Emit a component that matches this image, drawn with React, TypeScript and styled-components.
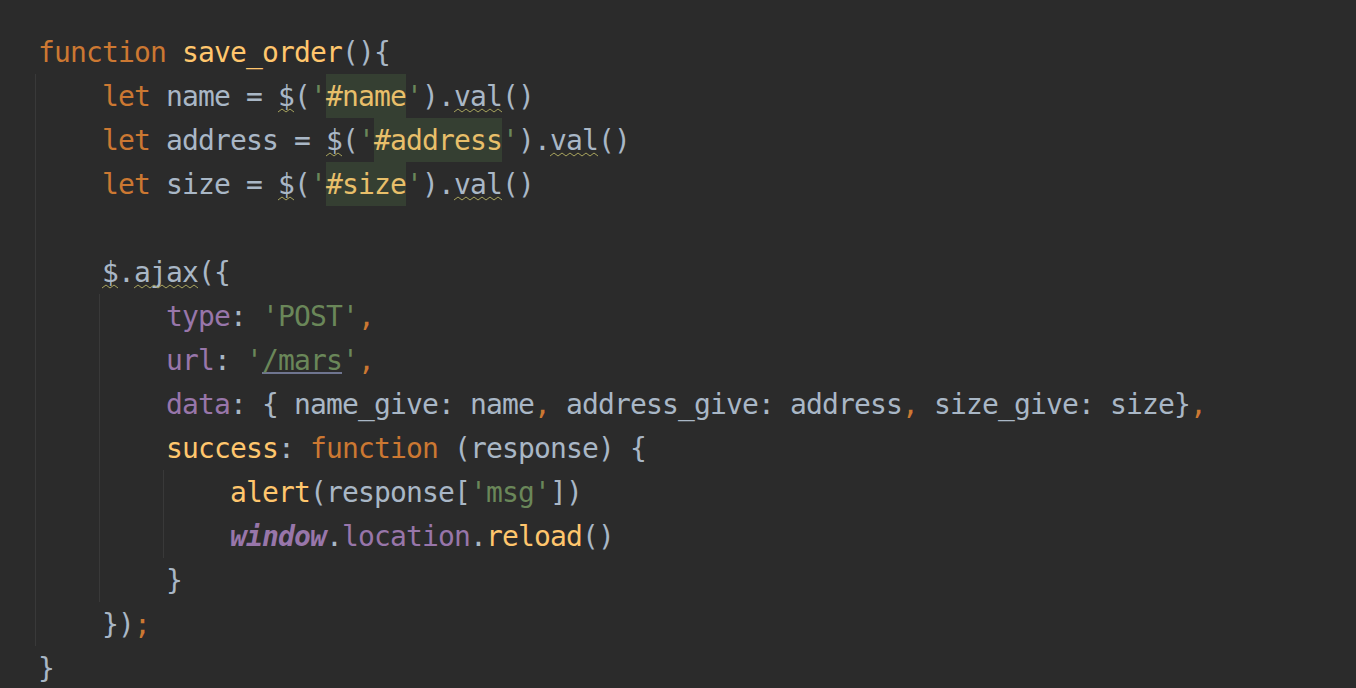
import React from "react";
import styled, { createGlobalStyle, css } from "styled-components";

const Global = createGlobalStyle`
  html, body {
    margin: 0;
    padding: 0;
    background: #2b2b2b;
    width: 1356px;
    height: 688px;
    overflow: hidden;
  }
`;

type Kind = "plain" | "kw" | "fn" | "str" | "prop" | "inj" | "glob";

const colors: Record<Kind, string> = {
  plain: "#a9b7c6",
  kw: "#cc7832",
  fn: "#ffc66d",
  str: "#6a8759",
  prop: "#9876aa",
  inj: "#e8bf6a",
  glob: "#9876aa",
};

const CHAR = 16;

const Editor = styled.div`
  width: 1356px;
  height: 688px;
  background: #2b2b2b;
  box-sizing: border-box;
  padding: 30px 0 0 38px;
  font-family: "DejaVu Sans Mono", "Liberation Mono", monospace;
  font-size: 28px;
  letter-spacing: -0.86px;
  color: #a9b7c6;
  overflow: hidden;
`;

const Line = styled.div`
  height: 44px;
  line-height: 44px;
  white-space: pre;
  padding-top: 1px;
  box-sizing: border-box;
`;

const Block = styled.div`
  margin-left: -3px;
  padding-left: 66px;
  border-left: 1px solid #393939;
`;

const Tok = styled.span<{ $k?: Kind; $link?: boolean }>`
  color: ${(p) => colors[p.$k ?? "plain"]};
  ${(p) =>
    p.$k === "glob" &&
    css`
      font-style: italic;
      font-weight: bold;
    `}
  ${(p) =>
    p.$link &&
    css`
      text-decoration-line: underline;
      text-decoration-color: #6f7590;
      text-decoration-thickness: 1.5px;
      text-underline-offset: 2px;
    `}
`;

const Cell = styled.span`
  display: inline-block;
  position: relative;
  height: 44px;
  line-height: 44px;
  margin-top: -1px;
  padding-top: 1px;
  box-sizing: border-box;
  vertical-align: top;
`;

const Injected = styled(Cell)`
  background: #353f32;
  color: #e8bf6a;
`;

const Wave = styled.svg`
  position: absolute;
  left: 0;
  top: 34px;
  overflow: visible;
  pointer-events: none;
`;

const Squiggle = ({ text }: { text: string }) => {
  const w = text.length * CHAR;
  const pts: string[] = [];
  for (let x = 0, i = 0; x <= w; x += 4, i++) {
    pts.push(`${x},${i % 2 === 0 ? 4 : 1}`);
  }
  return (
    <Cell>
      {text}
      <Wave width={w} height={5} viewBox={`0 0 ${w} 5`}>
        <polyline
          points={pts.join(" ")}
          fill="none"
          stroke="#a8a45e"
          strokeWidth={1}
        />
      </Wave>
    </Cell>
  );
};

const Selector = ({ text }: { text: string }) => (
  <>
    <Tok $k="str">'</Tok>
    <Injected>{text}</Injected>
    <Tok $k="str">'</Tok>
  </>
);

const LetLine = ({ name, sel }: { name: string; sel: string }) => (
  <Line>
    <Tok $k="kw">let</Tok> {name} = <Squiggle text="$" />(
    <Selector text={sel} />
    ).<Squiggle text="val" />()
  </Line>
);

export default function App() {
  return (
    <>
      <Global />
      <Editor>
        <Line>
          <Tok $k="kw">function</Tok> <Tok $k="fn">save_order</Tok>(){"{"}
        </Line>
        <Block>
          <LetLine name="name" sel="#name" />
          <LetLine name="address" sel="#address" />
          <LetLine name="size" sel="#size" />
          <Line> </Line>
          <Line>
            <Squiggle text="$" />.<Squiggle text="ajax" />
            {"({"}
          </Line>
          <Block>
            <Line>
              <Tok $k="prop">type</Tok>: <Tok $k="str">'POST'</Tok>
              <Tok $k="kw">,</Tok>
            </Line>
            <Line>
              <Tok $k="prop">url</Tok>: <Tok $k="str">'</Tok>
              <Tok $k="str" $link>
                /mars
              </Tok>
              <Tok $k="str">'</Tok>
              <Tok $k="kw">,</Tok>
            </Line>
            <Line>
              <Tok $k="prop">data</Tok>: {"{ name_give: name"}
              <Tok $k="kw">,</Tok> address_give: address<Tok $k="kw">,</Tok>{" "}
              {"size_give: size}"}
              <Tok $k="kw">,</Tok>
            </Line>
            <Line>
              <Tok $k="fn">success</Tok>: <Tok $k="kw">function</Tok> (response){" "}
              {"{"}
            </Line>
            <Block>
              <Line>
                <Tok $k="fn">alert</Tok>(response[<Tok $k="str">'msg'</Tok>])
              </Line>
              <Line>
                <Tok $k="glob">window</Tok>.<Tok $k="prop">location</Tok>.
                <Tok $k="fn">reload</Tok>()
              </Line>
            </Block>
            <Line>{"}"}</Line>
          </Block>
          <Line>
            {"})"}
            <Tok $k="kw">;</Tok>
          </Line>
        </Block>
        <Line>{"}"}</Line>
      </Editor>
    </>
  );
}
